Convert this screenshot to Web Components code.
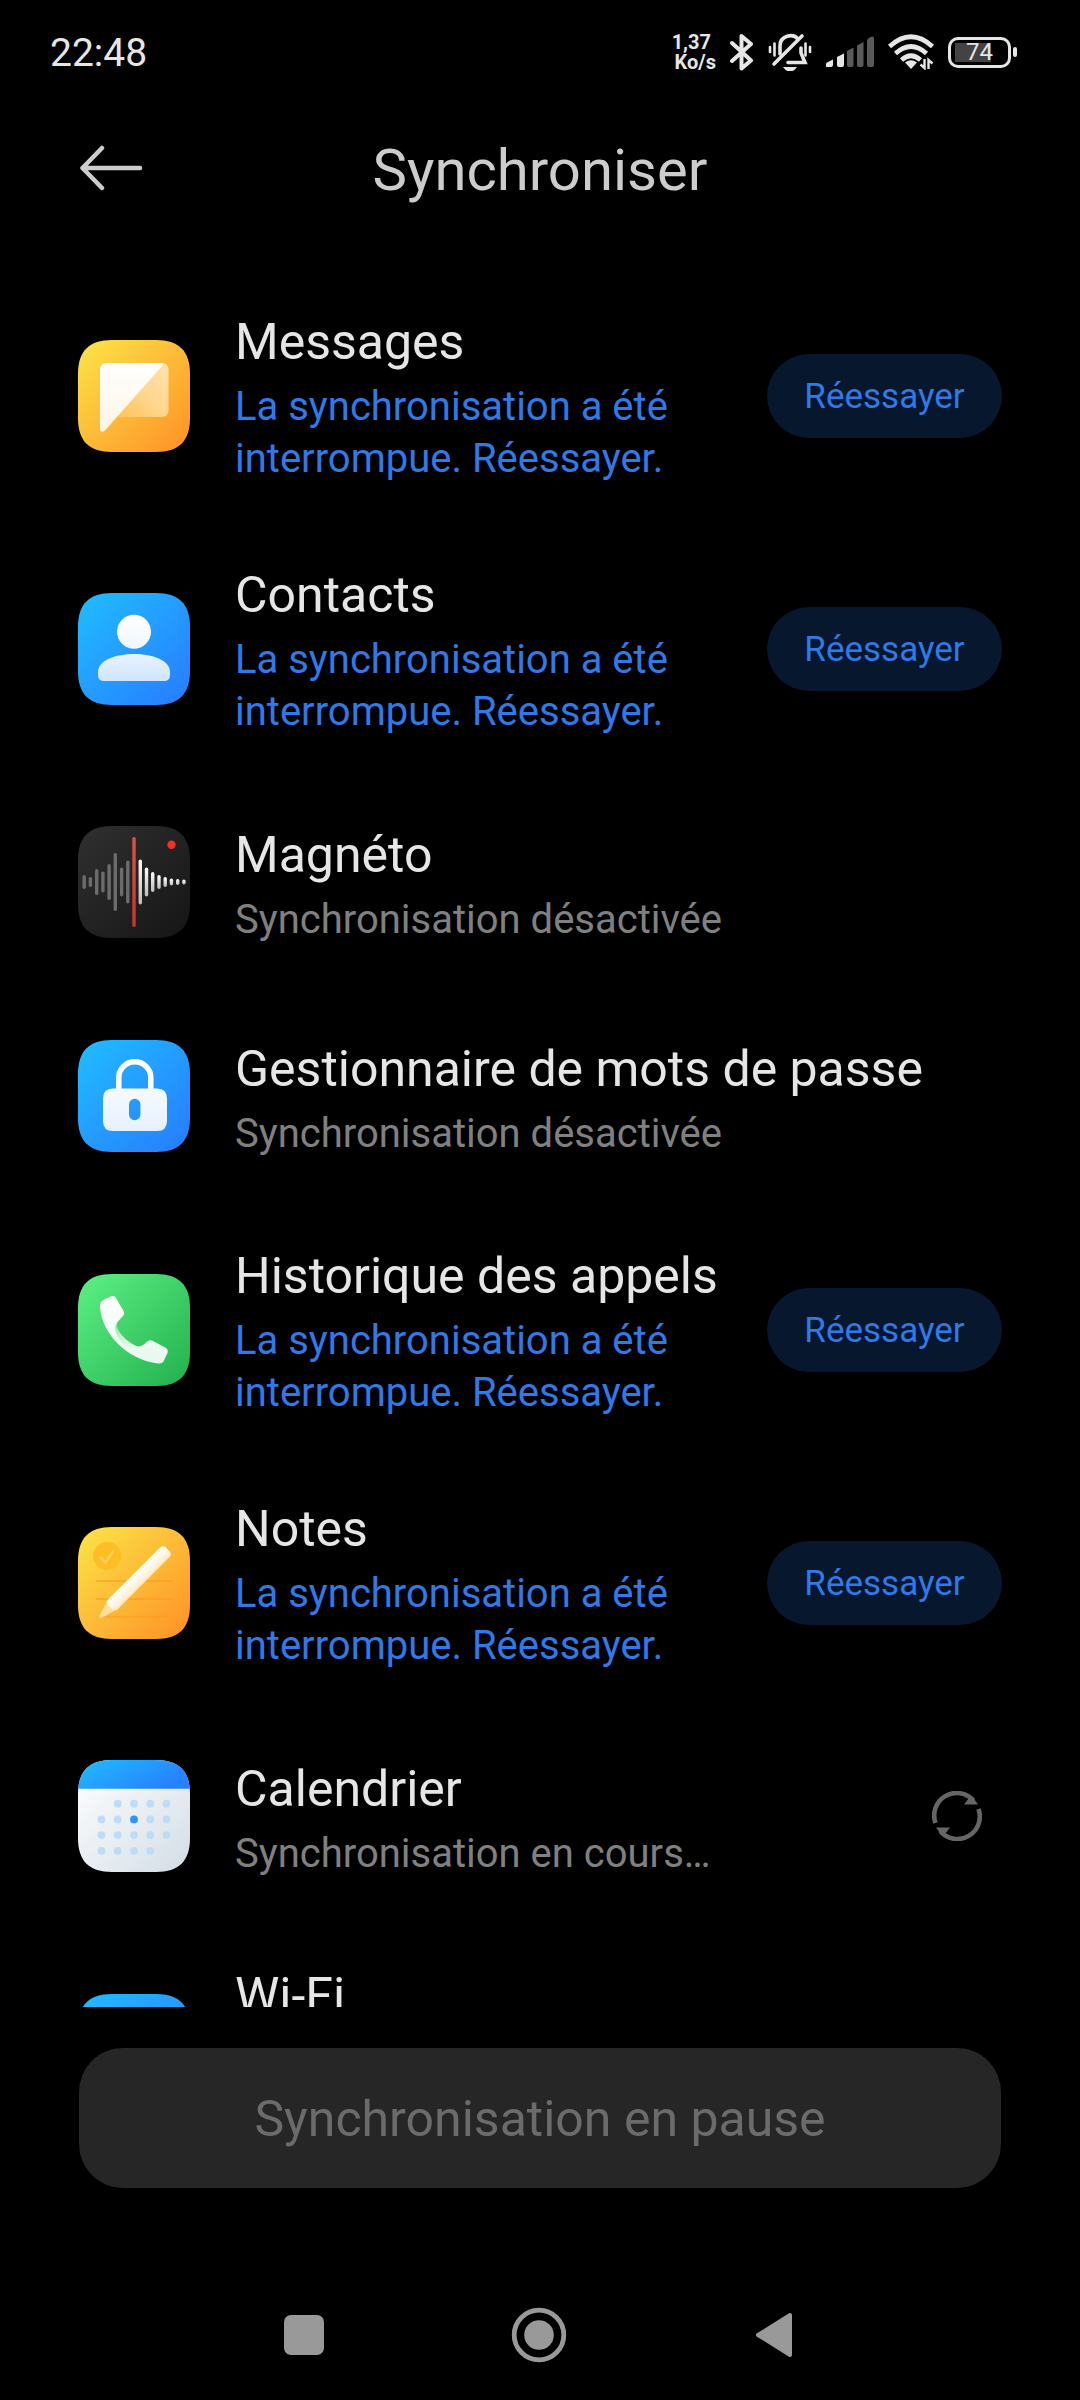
<!DOCTYPE html>
<html lang="fr">
<head>
<meta charset="utf-8">
<meta name="viewport" content="width=device-width, initial-scale=1">
<title>Synchroniser</title>
<style>
  html, body { margin: 0; height: 100%; background: #000; }
  body { font-family: Roboto, "Noto Sans", sans-serif; color: #e6e6e6; }
</style>
</head>
<body>
<sync-screen>
  <status-bar slot="status"></status-bar>
  <page-header slot="header">Synchroniser</page-header>
  <sync-item icon="messages" state="failed">Messages</sync-item>
  <sync-item icon="contacts" state="failed">Contacts</sync-item>
  <sync-item icon="recorder" state="off">Magnéto</sync-item>
  <sync-item icon="passwords" state="off">Gestionnaire de mots de passe</sync-item>
  <sync-item icon="calls" state="failed">Historique des appels</sync-item>
  <sync-item icon="notes" state="failed">Notes</sync-item>
  <sync-item icon="calendar" state="running">Calendrier</sync-item>
  <sync-item icon="wifi" state="pending">Wi-Fi</sync-item>
  <sync-action slot="action">Synchronisation en pause</sync-action>
  <nav-bar slot="nav"></nav-bar>
</sync-screen>

<script>
const define = (name, html, setup) => {
  const tpl = document.createElement('template');
  tpl.innerHTML = html;
  customElements.define(name, class extends HTMLElement {
    constructor() {
      super();
      this.attachShadow({ mode: 'open' }).append(tpl.content.cloneNode(true));
    }
    connectedCallback() { if (setup) setup(this, this.shadowRoot); }
  });
};

/* Screen shell: fixed bars around a scrolling list */
define('sync-screen', `
<style>
  :host { display: flex; flex-direction: column; height: 100vh; background: #000; }
  main { flex: 1; min-height: 0; overflow-y: auto; scrollbar-width: none; padding: 28px 78px 0; }
</style>
<slot name="status"></slot>
<slot name="header"></slot>
<main><slot></slot></main>
<slot name="action"></slot>
<slot name="nav"></slot>`);

define('status-bar', `
<style>
  :host { display: flex; align-items: center; justify-content: space-between; height: 96px; padding: 8px 63px 0 50px; box-sizing: border-box; color: #e6e6e6; }
  time { padding-top: 2px; font-size: 39px; line-height: 48px; }
  .tray { display: flex; align-items: center; gap: 14px; }
  .rate { display: flex; flex-direction: column; align-items: flex-end; font-size: 20px; line-height: 20px; font-weight: 700; }
  .rate span { display: block; }
  .rate span:first-child { padding-right: 5px; }
  svg { display: block; }
  .battery { display: flex; align-items: center; gap: 2px; }
  .cell { display: flex; align-items: center; justify-content: center; width: 63px; height: 31px; box-sizing: border-box; border: 3px solid #e6e6e6; border-radius: 10px; font-size: 24px; line-height: 24px; font-weight: 400;
    background: linear-gradient(#434343, #434343) 4px 3px / 36px 19px no-repeat; }
  .nub { width: 4px; height: 10px; border-radius: 2px; background: #e6e6e6; }
</style>
<time>22:48</time>
<div class="tray">
  <div class="rate"><span>1,37</span><span>Ko/s</span></div>
  <svg width="24" height="38" viewBox="0 0 24 38" fill="none" stroke="#e6e6e6" stroke-width="4" stroke-linecap="round" stroke-linejoin="round"><path d="M2 10 21 27.500 11.500 35.500V3L21 11 2 28"/></svg>
  <svg width="44" height="38" viewBox="0 0 44 38" fill="none" stroke="#e6e6e6" stroke-width="3.600" stroke-linecap="round"><path d="M2 14v5M6.500 10.500v12M37.500 10.500v12M42 14v5" stroke-width="2.600"/><path d="M12 21V13C12 2.500 25 0 30 6M33 15v5l4 9.500H20"/><path d="M6 31 34 3"/><path d="M15 34h14q-3 4.500-7 4.500T15 34Z" fill="#e6e6e6" stroke="none"/></svg>
  <svg width="48" height="32" viewBox="0 0 48 32"><g fill="#e6e6e6"><path d="M0 31v-3q0-1 1-1.500L7 23.500v5.500q0 2-2 2Z"/><path d="M11 29V21l7-3.500V29q0 2-2 2h-3q-2 0-2-2Z"/></g><g fill="#5a5a5a"><path d="M21 29V15l6.500-3.500V29q0 2-2 2H23q-2 0-2-2Z"/><path d="M31 29V9.500L37.500 6v23q0 2-2 2H33q-2 0-2-2Z"/><path d="M41 29V5q0-2 2-3l3-1.500q2 0 2 2V29q0 2-2 2h-3q-2 0-2-2Z"/></g></svg>
  <svg width="46" height="36" viewBox="0 0 46 36" fill="none" stroke="#e6e6e6" stroke-width="4.600"><path d="M1.500 12.500Q23-7 44.500 12.500M7.500 19.500Q23 5.500 38.500 19.500M13.500 26Q23 17.500 32.500 26"/><path d="M17 28.500Q23 24 29 28.500L23 35Z" fill="#e6e6e6" stroke="none"/><path d="M36.500 25v9L32.500 30.500M40.500 35V26L44.500 29.500" stroke-width="2.400"/></svg>
  <div class="battery"><div class="cell">74</div><div class="nub"></div></div>
</div>`);

define('page-header', `
<style>
  :host { display: grid; grid-template-columns: 112px 1fr 112px; align-items: center; height: 144px; padding: 0 55px; box-sizing: border-box; color: #ccc; }
  button { all: unset; display: grid; place-items: center; height: 112px; }
  h1 { margin: 0; padding-top: 4px; font-size: 58px; line-height: 68px; font-weight: 400; text-align: center; }
</style>
<button aria-label="Retour"><svg width="64" height="46" viewBox="0 0 64 46" fill="none" stroke="#ccc" stroke-width="4.500" stroke-linecap="round" stroke-linejoin="round"><path d="M23 3 3.500 23 23 43M3.500 23H61"/></svg></button>
<h1><slot></slot></h1>`);

const grad = (id, a, b) => `<linearGradient id="${id}" x1="0" y1="0" x2="1" y2="1"><stop stop-color="${a}"/><stop offset="1" stop-color="${b}"/></linearGradient>`;
const fade = (id, a, b) => `<linearGradient id="${id}" x1="0" y1="0" x2="0" y2="1"><stop stop-color="${a}"/><stop offset="1" stop-color="${b}"/></linearGradient>`;
const SQUIRCLE = 'M34 0H78C101 0 112 11 112 34V78C112 101 101 112 78 112H34C11 112 0 101 0 78V34C0 11 11 0 34 0Z';
const tile = (a, b, defs, art) => `<svg width="112" height="112" viewBox="0 0 112 112"><defs>${grad('bg', a, b)}${defs}</defs><path d="${SQUIRCLE}" fill="url(#bg)"/>${art}</svg>`;
const BLUE = ['#21bdff', '#277bff'];
const YELLOW = ['#fbe548', '#ff9026'];

const waveform = () => {
  const half = [7, 5, 13, 10.5, 18, 29, 14.5, 21.5, 45, 22.5, 14.5, 10, 7, 5, 3.5, 3, 2.5];
  return half.map((h, i) => {
    const color = i < 8 ? '#6c6c6c' : i === 8 ? 'url(#red)' : 'url(#white)';
    return `<rect x="${(6.2 + i * 6.23 - 1.7).toFixed(1)}" y="${56 - h}" width="3.400" height="${h * 2}" rx="1.700" fill="${color}"/>`;
  }).join('');
};
const days = () => {
  let out = '';
  for (let r = 0; r < 4; r++) for (let c = 0; c < 5; c++) {
    if ((r === 0 && c === 0) || (r === 3 && c === 4)) continue;
    const today = r === 1 && c === 2;
    out += `<circle cx="${23.5 + c * 16.25}" cy="${43.7 + r * 15.7}" r="3.900" fill="${today ? '#2e93fb' : '#bfdcf6'}"/>`;
  }
  return out;
};

const ICONS = {
  messages: tile(...YELLOW, fade('w', '#fff', '#fff4e4') + `<linearGradient id="f" x1="1" y1="0" x2="0" y2="1"><stop stop-color="#ffe3ac"/><stop offset=".5" stop-color="#ffd78f"/><stop offset="1" stop-color="#ffc257"/></linearGradient>`,
    `<path d="M84 23Q90.500 23 90.500 30V70Q90.500 77 84 77H38Z" fill="url(#f)"/><path d="M29 23H83Q86 23 84.500 25.500L27 90.500Q25 92.500 22.500 91Q22 90.500 22 89V30Q22 23 29 23Z" fill="url(#w)"/>`),
  contacts: tile(...BLUE, fade('h', '#fff', '#eef7ff') + fade('b', '#e8f3ff', '#cfe5ff'),
    `<circle cx="56" cy="38.700" r="17" fill="url(#h)"/><path d="M20 79C20 67 38 61 56 61S92 67 92 79V82Q92 88 86 88H26Q20 88 20 82Z" fill="url(#b)"/>`),
  recorder: tile('#303030', '#151515', fade('red', '#d9534c', '#c9352a') + fade('white', '#fff', '#bbb'),
    waveform() + '<circle cx="93.500" cy="18.700" r="4.200" fill="#ee3322"/>'),
  passwords: tile(...BLUE, fade('w', '#f6faff', '#e6f1ff'),
    `<path d="M40.800 50V37.700a16 16 0 0 1 32 0V50" fill="none" stroke="#fff" stroke-width="5.500"/><path fill-rule="evenodd" d="M35 48.500H79Q89 48.500 89 58.500V81Q89 91 79 91H35Q25 91 25 81V58.500Q25 48.500 35 48.500ZM51 64.500V74.500a5.700 5.700 0 0 0 11.400 0V64.500a5.700 5.700 0 0 0-11.400 0Z" fill="url(#w)"/>`),
  calls: tile('#5df184', '#22b04e', fade('w', '#fff', '#e8f7ec') + grad('s', '#5fdc85', '#ffffff00'),
    `<path d="M23 28Q24 26 33 22.500Q36 21 38 24L45.500 37Q47 40 44.500 42.500L39.500 48C36 54 45 65 57 71.500Q62 73.500 65 71L70 67Q72.500 65.500 75 67L88 74Q90.500 76 89.500 79L85.500 87.500Q84 90 80 89.500C50 86 23 60 22 32Q22 29.500 23 28Z" fill="url(#w)"/><path d="M39.500 48C36 54 45 65 57 71.500Q60 73 63 72L55 78C47 73 40 65 37.500 57Q36.500 51 39.500 48Z" fill="url(#s)" opacity=".8"/>`),
  notes: tile(...YELLOW, `<linearGradient id="p" gradientUnits="userSpaceOnUse" x1="52" y1="47" x2="64" y2="59"><stop stop-color="#fff"/><stop offset=".5" stop-color="#fff8ec"/><stop offset="1" stop-color="#ffe7bf"/></linearGradient>`,
    `<circle cx="29.300" cy="29" r="14" fill="#fdbd24"/><path d="M22 30 27.500 35.500 36 23" fill="none" stroke="#fecd55" stroke-width="2.600"/><path d="M18 54H95M18 72H95M25 89.700H90" stroke="#ff9a1c" stroke-opacity=".6" stroke-width="1.800"/><path d="M82 20.500Q85 18 88 20.500L92 25Q94 27.500 91.500 30L40 82Q37 85 33.500 82L30 79Q27 75.500 30 72.500Z" fill="url(#p)"/><path d="M28.500 76Q29 79 32.500 81Q35 83.500 37 83.500L23.500 91Q20.500 91.500 21.500 88.500Z" fill="#ffdf9d"/>`),
  calendar: tile('#fff', '#d3dde6', `<linearGradient id="top" x1="0" y1="0" x2="1" y2=".5"><stop stop-color="#21bdff"/><stop offset="1" stop-color="#2781ff"/></linearGradient><clipPath id="c"><path d="${SQUIRCLE}"/></clipPath>`,
    `<path d="M0 0H112V28.700H0Z" fill="url(#top)" clip-path="url(#c)"/>` + days()),
  wifi: tile(...BLUE, '', ''),
};

define('app-icon', `<style>:host { display: block; flex: none; width: 112px; height: 112px; } svg { display: block; }</style><div></div>`,
  (host, root) => { root.querySelector('div').innerHTML = ICONS[host.getAttribute('name')] || ''; });

define('retry-button', `
<style>
  :host { display: block; flex: none; }
  button { appearance: none; border: 0; margin: 0; width: 235px; height: 84px; padding: 2px 0 0; border-radius: 42px; background: #07172e; color: #3079e8; font: inherit; font-size: 35px; line-height: 42px; }
</style>
<button type="button"><slot></slot></button>`);

define('sync-spinner', `
<style>:host { display: block; flex: none; padding-right: 20px; } svg { display: block; }</style>
<svg width="50" height="50" viewBox="0 0 50 50" role="img" aria-label="Synchronisation"><g id="half"><path d="M3.500 32A22.500 22.500 0 0 1 41.500 9.500" fill="none" stroke="#666" stroke-width="4.600"/><path d="M32 13.500H46L41 6.500 37 7Z" fill="#666"/></g><use href="#half" transform="rotate(180 25 25)"/></svg>`);

const STATES = {
  failed: { text: 'La synchronisation a été interrompue. Réessayer.', end: '<retry-button>Réessayer</retry-button>' },
  off: { text: 'Synchronisation désactivée', end: '' },
  running: { text: 'Synchronisation en cours…', end: '<sync-spinner></sync-spinner>' },
  pending: { text: '', end: '' },
};

define('sync-item', `
<style>
  :host { display: flex; align-items: center; gap: 45px; min-height: 214px; padding: 38px 0 36px; box-sizing: border-box; }
  .body { flex: 1; min-width: 0; display: flex; flex-direction: column; gap: 3px; }
  h2 { margin: 0; font-size: 50px; line-height: 72px; font-weight: 400; color: #e6e6e6; }
  p { margin: 0; font-size: 40px; line-height: 52px; color: #808080; }
  :host([state="failed"]) p { color: #3079e8; }
  :host([state="pending"]) p { min-height: 104px; }
</style>
<app-icon></app-icon>
<div class="body"><h2><slot></slot></h2><p></p></div>`,
(host, root) => {
  const state = STATES[host.getAttribute('state')];
  root.querySelector('app-icon').replaceWith(Object.assign(document.createElement('template'), { innerHTML: `<app-icon name="${host.getAttribute('icon')}"></app-icon>` }).content);
  root.querySelector('p').textContent = state.text;
  if (state.end) root.querySelector('.body').insertAdjacentHTML('afterend', state.end);
});

define('sync-action', `
<style>
  :host { display: block; padding: 41px 79px 82px; }
  button { appearance: none; display: block; width: 100%; height: 140px; margin: 0; border: 0; padding: 2px 0 0; border-radius: 44px; background: #262626; color: #6b6b6b; font: inherit; font-size: 50px; line-height: 60px; }
</style>
<button type="button" disabled><slot></slot></button>`);

define('nav-bar', `
<style>
  :host { display: block; }
  nav { display: flex; align-items: center; justify-content: center; gap: 123px; height: 130px; padding-right: 3px; }
  button { all: unset; display: grid; place-items: center; width: 112px; height: 112px; }
</style>
<nav>
  <button aria-label="Applications récentes"><svg width="40" height="40"><rect width="40" height="40" rx="7" fill="#999"/></svg></button>
  <button aria-label="Accueil"><svg width="56" height="56" viewBox="0 0 56 56"><circle cx="28" cy="28" r="24.800" fill="none" stroke="#999" stroke-width="4.800"/><circle cx="28" cy="28" r="14.800" fill="#999"/></svg></button>
  <button aria-label="Retour"><svg width="38" height="46" viewBox="0 0 38 46"><path d="M3 23 35 3V43Z" fill="#999" stroke="#999" stroke-width="4" stroke-linejoin="round"/></svg></button>
</nav>`);
</script>
</body>
</html>
